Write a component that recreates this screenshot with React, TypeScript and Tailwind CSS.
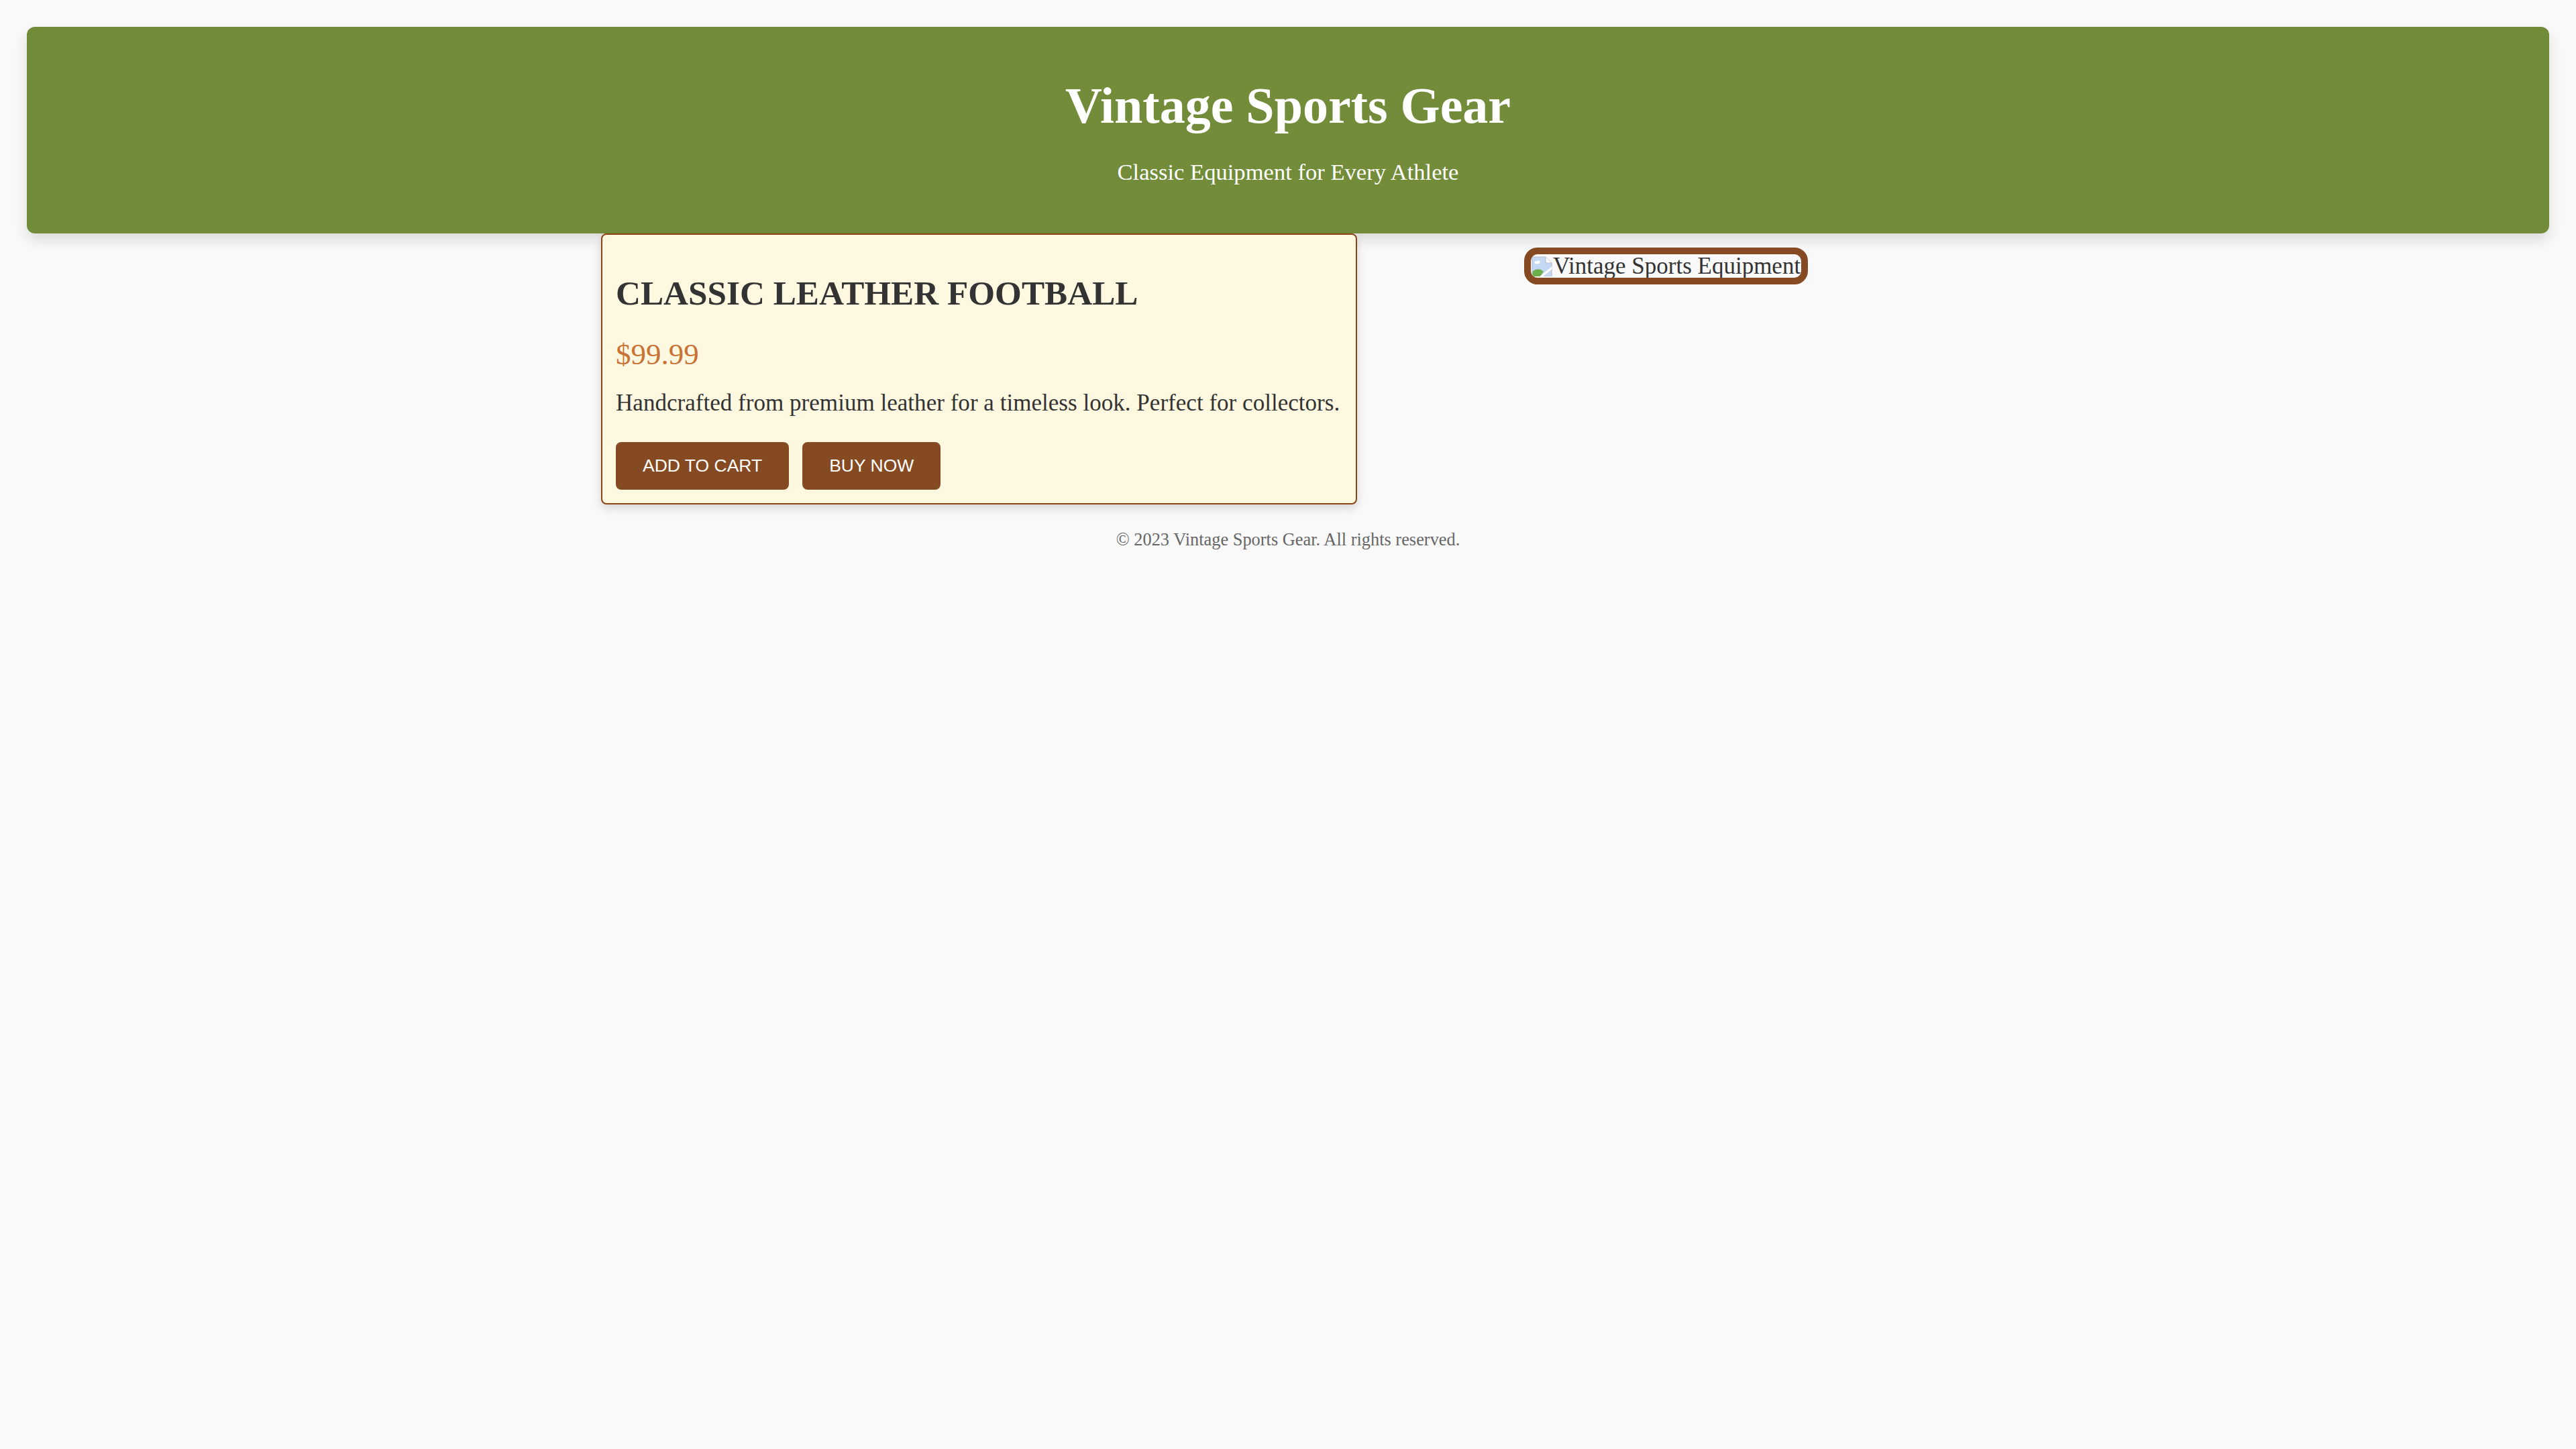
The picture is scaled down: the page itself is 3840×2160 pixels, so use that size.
import React from 'react';

const serif = "font-['Liberation_Serif',Georgia,serif]";

function BrokenImageIcon() {
  return (
    <svg width="32" height="30" viewBox="0 0 16 15" className="shrink-0">
      <path d="M0.5 0.5h10l4.5 4.5v10H0.5z" fill="#c5d8f3" stroke="#b4bfcc" strokeWidth="0.6" />
      <path d="M10.5 0.5v4.5h4.5" fill="#ffffff" stroke="#b4bfcc" strokeWidth="0.6" />
      <ellipse cx="4.2" cy="4.6" rx="2" ry="1.1" fill="#ffffff" />
      <ellipse cx="5.2" cy="4" rx="1.1" ry="0.9" fill="#ffffff" />
      <path d="M0.8 15V11.4Q4.5 8 9 11.2L6.6 15z" fill="#6cae4a" />
      <path d="M6 15.2L15.2 7.6V9.6L8.4 15.2z" fill="#ffffff" />
    </svg>
  );
}

function ProductCard() {
  return (
    <div className="w-[1127px] shrink-0 rounded-[8px] border-2 border-[#8b4513] bg-[#fef8e0] p-[20px] shadow-[0_6px_14px_rgba(0,0,0,0.14)]">
      <h2 className={`${serif} mt-[37px] text-[51.2px] leading-[60px] font-bold text-[#333333]`}>
        CLASSIC LEATHER FOOTBALL
      </h2>
      <p className={`${serif} mt-[35px] text-[45px] leading-[52px] text-[#c97236]`}>$99.99</p>
      <p className={`${serif} mt-[25px] text-[35.1px] leading-[44px] whitespace-nowrap text-[#333333]`}>
        Handcrafted from premium leather for a timeless look. Perfect for collectors.
      </p>
      <div className="mt-[36px] flex gap-[20px]">
        <button className="rounded-[8px] bg-[#854a22] px-[40px] py-[20px] font-['Liberation_Sans',Arial,sans-serif] text-[26.5px] leading-[31px] text-white">
          ADD TO CART
        </button>
        <button className="rounded-[8px] bg-[#854a22] px-[40px] py-[20px] font-['Liberation_Sans',Arial,sans-serif] text-[26.5px] leading-[31px] text-white">
          BUY NOW
        </button>
      </div>
    </div>
  );
}

export default function App() {
  return (
    <div className="min-h-screen bg-[#f9f9f9] pt-[40px]">
      <header className="mx-[40px] rounded-[12px] bg-[#728c39] pt-[75px] pb-[72px] text-center text-white shadow-[0_10px_20px_rgba(0,0,0,0.12)]">
        <h1 className={`${serif} text-[76px] leading-[85px] font-bold`}>Vintage Sports Gear</h1>
        <p className={`${serif} mt-[36px] text-[34.6px] leading-[40px]`}>Classic Equipment for Every Athlete</p>
      </header>

      <main className="mx-auto flex w-[2048px] items-start">
        <ProductCard />
        <div className="mt-[21px] flex flex-1 justify-center">
          <div className="flex h-[55px] items-center overflow-hidden rounded-[20px] border-[10px] border-[#854a22] bg-[#f9f9f9] px-[1px]">
            <BrokenImageIcon />
            <span className={`${serif} text-[35px] leading-[34px] whitespace-nowrap text-[#333333]`}>
              Vintage Sports Equipment
            </span>
          </div>
        </div>
      </main>

      <footer className={`${serif} mt-[37px] text-center text-[26.4px] leading-[31px] text-[#666666]`}>
        © 2023 Vintage Sports Gear. All rights reserved.
      </footer>
    </div>
  );
}
